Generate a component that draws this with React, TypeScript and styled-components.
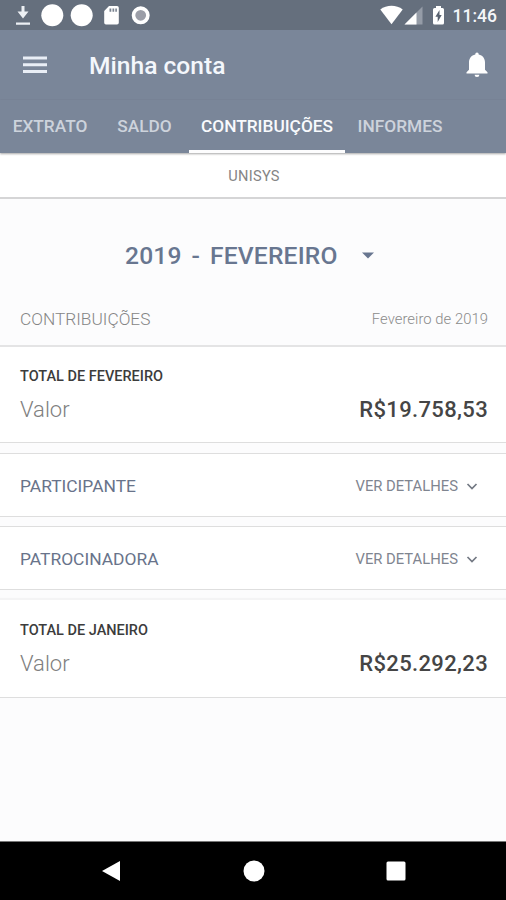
import React from 'react';
import styled, { createGlobalStyle } from 'styled-components';

const GlobalStyle = createGlobalStyle`
  * { box-sizing: border-box; }
  body {
    margin: 0;
    background: #fcfcfd;
    font-family: Roboto, "Liberation Sans", sans-serif;
  }
`;

const Screen = styled.div`
  display: flex;
  flex-direction: column;
  width: 506px;
  height: 900px;
  background: #fcfcfd;
  overflow: hidden;
`;

const StatusBar = styled.header`
  display: flex;
  justify-content: space-between;
  flex: none;
  height: 30px;
  background: #656f7d;
`;

const Clock = styled.span`
  margin: 0 9px 0 8px;
  color: #f4f6f9;
  font-size: 17.5px;
  font-weight: 500;
  line-height: 32px;
`;

const StatusGroup = styled.div`
  display: flex;
`;

const AppBar = styled.div`
  display: flex;
  align-items: center;
  flex: none;
  height: 70px;
  padding: 0 17px 0 23px;
  background: #7a8699;
`;

const Title = styled.h1`
  flex: 1;
  margin: 2px 0 0 42px;
  color: #f4f7fc;
  font-size: 24.6px;
  font-weight: 500;
  line-height: 30px;
`;

const TabBar = styled.nav`
  display: flex;
  flex: none;
  height: 53px;
  background: #7a8699;
  box-shadow: 0 1px 2px rgba(0, 0, 0, 0.35);
  z-index: 1;
`;

const Tab = styled.button<{ $active?: boolean; $width: number }>`
  flex: none;
  width: ${(p) => p.$width}px;
  padding: 3px 0 0;
  border: 0;
  border-bottom: 3px solid ${(p) => (p.$active ? '#fdfdfe' : 'transparent')};
  background: none;
  color: ${(p) => (p.$active ? '#f8fafd' : '#cdd3dc')};
  font-family: inherit;
  font-size: 17.3px;
  font-weight: 500;
  line-height: 47px;
  text-align: center;
  white-space: nowrap;
`;

const Company = styled.div`
  flex: none;
  height: 46px;
  padding-left: 2px;
  border-bottom: 2px solid #d5d5d6;
  background: #fff;
  color: #858585;
  font-size: 14.6px;
  letter-spacing: 0.3px;
  line-height: 46px;
  text-align: center;
`;

const MonthPicker = styled.div`
  display: flex;
  align-items: center;
  flex: none;
  height: 96px;
  padding: 16px 0 0 125px;
  color: #687690;
  font-size: 24.6px;
  font-weight: 500;
  letter-spacing: 0.2px;
  word-spacing: 3.5px;
  svg { margin-left: 24px; }
`;

const SectionHeader = styled.div`
  display: flex;
  align-items: center;
  justify-content: space-between;
  flex: none;
  height: 52px;
  padding: 0 18px 2px 20px;
  border-bottom: 2px solid #e4e4e5;
`;

const SectionTitle = styled.h2`
  margin: 0;
  color: #858585;
  font-size: 17.3px;
  font-weight: 300;
`;

const Period = styled.span`
  color: #8b8b8b;
  font-size: 14.8px;
  font-weight: 300;
  letter-spacing: 0.05px;
`;

const TotalCard = styled.section<{ $soft?: boolean }>`
  flex: none;
  height: ${(p) => (p.$soft ? 98 : 96)}px;
  padding: ${(p) => (p.$soft ? 22 : 21)}px 18px 0 20px;
  border-bottom: 1px solid #dedede;
  background: #fff;
  box-shadow: ${(p) => (p.$soft ? '0 -2px 1px rgba(0, 0, 0, 0.03)' : 'none')};
`;

const TotalTitle = styled.h3`
  margin: 0;
  color: #3c3c3c;
  font-size: 14.5px;
  font-weight: 500;
  line-height: 18px;
`;

const TotalRow = styled.div`
  display: flex;
  align-items: center;
  justify-content: space-between;
  height: 28px;
  margin-top: 9px;
`;

const ValueLabel = styled.span`
  color: #808080;
  font-size: 22px;
  font-weight: 300;
`;

const Amount = styled.strong`
  color: #454545;
  font-size: 22px;
  font-weight: 500;
  letter-spacing: 0.35px;
`;

const Gap = styled.div<{ $height: number }>`
  flex: none;
  height: ${(p) => p.$height}px;
`;

const DetailCard = styled.section`
  display: flex;
  align-items: center;
  justify-content: space-between;
  flex: none;
  height: 64px;
  padding: 1px 28px 0 20px;
  border: solid #dedede;
  border-width: 1px 0;
  background: #fff;
`;

const DetailName = styled.h3`
  margin: 0;
  color: #68738a;
  font-size: 17.4px;
  font-weight: 400;
`;

const DetailLink = styled.button`
  display: flex;
  align-items: center;
  gap: 8px;
  padding: 0;
  border: 0;
  background: none;
  color: #7f8590;
  font-family: inherit;
  font-size: 14.8px;
`;

const NavBar = styled.footer`
  display: flex;
  align-items: center;
  justify-content: space-between;
  flex: none;
  height: 59px;
  margin-top: auto;
  padding: 0 100px 0 101px;
  border-top: 1px solid #777;
  background: #000;
`;

const StatusIcons = () => (
  <svg width="160" height="30" fill="#fff">
    <path d="M21.500 6h3v5.500h4L23 18.500 17.500 11.500h4zM16 22.500h14v2.200H16z" fill="#eceff3" />
    <circle cx="52.300" cy="15.300" r="11" />
    <circle cx="81.700" cy="15.300" r="11" />
    <path d="M109 6h8a1.800 1.800 0 0 1 1.800 1.800v14.900a1.800 1.800 0 0 1-1.800 1.800h-11a1.800 1.800 0 0 1-1.800-1.800V11z" />
    <path d="M109.500 8.500h1.800v3.200h-1.800zM112.500 8.500h1.700v3.200h-1.700zM115.300 8.500h1.600v3.200h-1.600z" fill="#7a8390" />
    <circle cx="140.700" cy="15.300" r="7.200" fill="#9b9ea8" stroke="#fff" strokeWidth="3.600" />
  </svg>
);

const SignalIcons = () => (
  <svg width="70" height="30" fill="#fff">
    <path d="M5.300 9.500C11.500 4.500 21.500 4.500 27.700 9.500L16.500 24.200z" />
    <path d="M47.500 6.500v18H29.500z" fill="#959ca7" />
    <path d="M41.500 12.500v12H29.500z" />
    <path d="M61 6h5v2h1.500a1.500 1.500 0 0 1 1.500 1.500V23a1.500 1.500 0 0 1-1.500 1.500h-8A1.500 1.500 0 0 1 58 23V9.500A1.500 1.500 0 0 1 59.500 8H61z" />
    <path d="M64.500 10v5h2.200l-4 7v-5.200h-2.300z" fill="#586270" />
  </svg>
);

const MenuIcon = () => (
  <svg width="24" height="18" fill="#e9eef6">
    <path d="M0 0.500h24v3H0zM0 7.200h24v3H0zM0 14h24v3H0z" />
  </svg>
);

const BellIcon = () => (
  <svg width="24" height="28" fill="#fff">
    <path d="M12 1.500c1.100 0 1.700.7 1.700 2 4 .9 6.300 4 6.300 8v7.300l2.500 2.400v1.300h-21v-1.300L4 18.800v-7.300c0-4 2.300-7.100 6.300-8 0-1.300.6-2 1.700-2z" />
    <path d="M9.600 23.700h4.800a2.400 2.400 0 0 1-4.800 0z" />
  </svg>
);

const Chevron = () => (
  <svg width="12" height="8" fill="none" stroke="#737983" strokeWidth="1.700">
    <path d="M1.500 2L6 6.500l4.500-4.500" />
  </svg>
);

const Total = ({ title, amount, soft }: { title: string; amount: string; soft?: boolean }) => (
  <TotalCard $soft={soft}>
    <TotalTitle>{title}</TotalTitle>
    <TotalRow>
      <ValueLabel>Valor</ValueLabel>
      <Amount>{amount}</Amount>
    </TotalRow>
  </TotalCard>
);

const Detail = ({ name }: { name: string }) => (
  <DetailCard>
    <DetailName>{name}</DetailName>
    <DetailLink>
      VER DETALHES
      <Chevron />
    </DetailLink>
  </DetailCard>
);

export default function App() {
  return (
    <>
      <GlobalStyle />
      <Screen>
        <StatusBar>
          <StatusIcons />
          <StatusGroup>
            <SignalIcons />
            <Clock>11:46</Clock>
          </StatusGroup>
        </StatusBar>
        <AppBar>
          <MenuIcon />
          <Title>Minha conta</Title>
          <BellIcon />
        </AppBar>
        <TabBar>
          <Tab $width={100}>EXTRATO</Tab>
          <Tab $width={89}>SALDO</Tab>
          <Tab $width={156} $active>CONTRIBUIÇÕES</Tab>
          <Tab $width={110}>INFORMES</Tab>
        </TabBar>
        <Company>UNISYS</Company>
        <MonthPicker>
          2019 - FEVEREIRO
          <svg width="12" height="7" fill="#687690"><path d="M0 0.500h12L6 6.500z" /></svg>
        </MonthPicker>
        <SectionHeader>
          <SectionTitle>CONTRIBUIÇÕES</SectionTitle>
          <Period>Fevereiro de 2019</Period>
        </SectionHeader>
        <Total title="TOTAL DE FEVEREIRO" amount="R$19.758,53" />
        <Gap $height={10} />
        <Detail name="PARTICIPANTE" />
        <Gap $height={9} />
        <Detail name="PATROCINADORA" />
        <Gap $height={10} />
        <Total title="TOTAL DE JANEIRO" amount="R$25.292,23" soft />
        <NavBar>
          <svg width="20" height="22" fill="#fff"><path d="M1 11L19 1v20z" /></svg>
          <svg width="22" height="22" fill="#fff"><circle cx="11" cy="11" r="10.500" /></svg>
          <svg width="20" height="20" fill="#fff"><rect x="0.500" y="0.500" width="19" height="19" rx="1.500" /></svg>
        </NavBar>
      </Screen>
    </>
  );
}
